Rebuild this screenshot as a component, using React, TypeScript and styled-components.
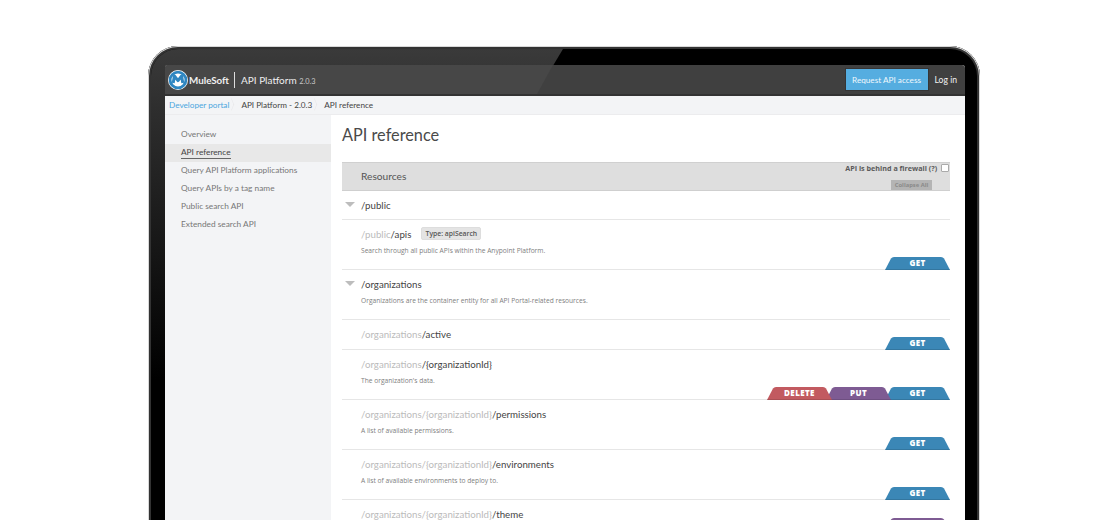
import React from "react";
import styled, { createGlobalStyle } from "styled-components";

type Method = "GET" | "PUT" | "DELETE";

interface Resource {
  dim?: string;
  name: string;
  desc?: string;
  badge?: string;
  top?: boolean;
  methods?: Method[];
  height: number;
}

const navItems = [
  "Overview",
  "API reference",
  "Query API Platform applications",
  "Query APIs by a tag name",
  "Public search API",
  "Extended search API",
];

const resources: Resource[] = [
  { name: "/public", top: true, height: 29 },
  {
    dim: "/public",
    name: "/apis",
    badge: "Type: apiSearch",
    desc: "Search through all public APIs within the Anypoint Platform.",
    methods: ["GET"],
    height: 50,
  },
  {
    name: "/organizations",
    top: true,
    desc: "Organizations are the container entity for all API Portal-related resources.",
    height: 50,
  },
  { dim: "/organizations", name: "/active", methods: ["GET"], height: 30 },
  {
    dim: "/organizations",
    name: "/{organizationId}",
    desc: "The organization's data.",
    methods: ["GET", "PUT", "DELETE"],
    height: 50,
  },
  {
    dim: "/organizations/{organizationId}",
    name: "/permissions",
    desc: "A list of available permissions.",
    methods: ["GET"],
    height: 50,
  },
  {
    dim: "/organizations/{organizationId}",
    name: "/environments",
    desc: "A list of available environments to deploy to.",
    methods: ["GET"],
    height: 50,
  },
  { dim: "/organizations/{organizationId}", name: "/theme", methods: ["PUT"], height: 30 },
];

const App: React.FC = () => {
  return (
    <Stage>
      <GlobalStyle />
      <Laptop>
        <Screen>
          <Header>
            <Brand>
              <svg width="20" height="20" viewBox="0 0 20 20">
                <circle cx="10" cy="10" r="10" fill="#fff" />
                <circle cx="10" cy="10" r="7.9" fill="none" stroke="#2f86c1" strokeWidth="2.8" />
                <path
                  d="M5.2 13 L6.4 6 L10 10.6 L13.6 6 L14.8 13"
                  fill="none"
                  stroke="#2f86c1"
                  strokeWidth="3"
                  strokeLinejoin="round"
                />
              </svg>
              <BrandName>MuleSoft</BrandName>
              <BrandDivider />
              <Product>
                API Platform <Version>2.0.3</Version>
              </Product>
            </Brand>
            <HeaderActions>
              <RequestButton>Request API access</RequestButton>
              <LogIn>Log in</LogIn>
            </HeaderActions>
          </Header>
          <Breadcrumbs>
            <Crumb link>Developer portal</Crumb>
            <Crumb>API Platform - 2.0.3</Crumb>
            <Crumb last>API reference</Crumb>
          </Breadcrumbs>
          <Body>
            <Sidebar>
              {navItems.map((item) => (
                <NavItem key={item} active={item === "API reference"}>
                  <span>{item}</span>
                </NavItem>
              ))}
            </Sidebar>
            <Main>
              <Title>API reference</Title>
              <ResourcesBar>
                <ResourcesLabel>Resources</ResourcesLabel>
                <BarControls>
                  <Firewall>
                    API is behind a firewall (?) <FakeCheckbox />
                  </Firewall>
                  <CollapseAll>Collapse All</CollapseAll>
                </BarControls>
              </ResourcesBar>
              {resources.map((res) => (
                <Row key={res.name} rowHeight={res.height}>
                  {res.top && <Caret />}
                  <RowText>
                    <PathLine>
                      {res.dim && <Dim>{res.dim}</Dim>}
                      {res.name}
                      {res.badge && <Badge>{res.badge}</Badge>}
                    </PathLine>
                    {res.desc && <Desc>{res.desc}</Desc>}
                  </RowText>
                  {res.methods && (
                    <Tabs>
                      {res.methods.map((m) => (
                        <Tab key={m} method={m}>
                          {m}
                        </Tab>
                      ))}
                    </Tabs>
                  )}
                </Row>
              ))}
            </Main>
          </Body>
        </Screen>
      </Laptop>
    </Stage>
  );
};

export default App;

const GlobalStyle = createGlobalStyle`
  html, body {
    margin: 0;
    padding: 0;
    background: #fff;
    overflow: hidden;
  }
`;

const din = `Lato, "Liberation Sans", sans-serif`;
const open = `"Open Sans", "Liberation Sans", sans-serif`;

const tabColors: { [key in Method]: string } = {
  GET: "#3b87b6",
  PUT: "#7e5b93",
  DELETE: "#c25a60",
};

const Stage = styled.div`
  width: 1120px;
  height: 520px;
  overflow: hidden;
  padding: 46px 0 0 148px;
  box-sizing: border-box;
`;

const Laptop = styled.div`
  position: relative;
  width: 832px;
  height: 520px;
  box-sizing: border-box;
  padding: 19px 15px 0 17px;
  background: #000;
  border-radius: 30px 30px 0 0;
  box-shadow: inset 0 0 0 1px #d8d8d8, inset 0 0 0 3px #333;

  &::before {
    content: "";
    position: absolute;
    inset: 3px 3px 0 3px;
    border-radius: 27px 27px 0 0;
    background: linear-gradient(#3a3a3a 0, #2e2e2e 60px, #000 330px);
    clip-path: polygon(0 0, 412px 0, 100px 520px, 0 520px);
  }
`;

const Screen = styled.div`
  position: relative;
  width: 800px;
  height: 470px;
  background: #fff;
  border-radius: 3px 3px 0 0;
  overflow: hidden;
`;

const Header = styled.div`
  position: relative;
  height: 29px;
  display: flex;
  align-items: center;
  justify-content: space-between;
  background: #404040;
  border-bottom: 2px solid #333;

  &::before {
    content: "";
    position: absolute;
    inset: 0;
    background: #474747;
    clip-path: polygon(0 0, 388px 0, 372px 100%, 0 100%);
  }
`;

const Brand = styled.div`
  position: relative;
  display: flex;
  align-items: center;
  padding-left: 3px;
  color: #fff;
`;

const BrandName = styled.span`
  font: 700 9.8px ${din};
  margin-left: 1px;
  width: 45px;
  color: #f0f0f0;
  white-space: nowrap;
`;

const BrandDivider = styled.span`
  width: 1px;
  height: 16px;
  background: #ddd;
  margin: 0 6px 0 0;
`;

const Product = styled.span`
  font: 400 10px ${din};
  color: #eee;
  white-space: nowrap;
`;

const Version = styled.span`
  font-size: 7.4px;
  color: #c8c8c8;
`;

const HeaderActions = styled.div`
  position: relative;
  display: flex;
  align-items: center;
  padding-right: 8px;
`;

const RequestButton = styled.div`
  width: 82px;
  height: 21px;
  display: flex;
  align-items: center;
  justify-content: center;
  background: #55ade0;
  box-shadow: 0 0 0 1px #353535;
  color: #f0f8fd;
  font: 400 8.2px ${din};
  white-space: nowrap;
`;

const LogIn = styled.div`
  margin-left: 7px;
  color: #f2f2f2;
  font: 400 8.6px ${din};
  white-space: nowrap;
`;

const Breadcrumbs = styled.div`
  height: 18px;
  display: flex;
  align-items: center;
  background: #f3f4f6;
  border-bottom: 1px solid #ececee;
  padding-left: 4px;
`;

const Crumb = styled.span<{ link?: boolean; last?: boolean }>`
  position: relative;
  font: 400 8.2px ${din};
  color: ${(props) => (props.link ? "#4aa6de" : "#444")};
  margin-right: ${(props) => (props.last ? "0" : "12px")};
  white-space: nowrap;

  &::after {
    content: "";
    display: ${(props) => (props.last ? "none" : "block")};
    position: absolute;
    right: -7px;
    top: 0;
    width: 8px;
    height: 8px;
    border-top: 1px solid #e6e6e8;
    border-right: 1px solid #e6e6e8;
    transform: scaleX(0.4) rotate(45deg);
  }
`;

const Body = styled.div`
  display: flex;
  height: 420px;
`;

const Sidebar = styled.div`
  width: 166px;
  flex: none;
  box-sizing: border-box;
  padding-top: 11px;
  background: #f3f4f6;
`;

const NavItem = styled.div<{ active?: boolean }>`
  height: 18px;
  box-sizing: border-box;
  display: flex;
  align-items: center;
  padding: 0 0 1px 16px;
  background: ${(props) => (props.active ? "#e8e8e8" : "transparent")};

  > span {
    font: 400 8.3px ${din};
    color: ${(props) => (props.active ? "#444" : "#777")};
    border-bottom: ${(props) => (props.active ? "1px solid #666" : "none")};
    line-height: 11px;
    white-space: nowrap;
  }
`;

const Main = styled.div`
  flex: 1;
  box-sizing: border-box;
  padding: 0 15px 0 11px;
`;

const Title = styled.h1`
  margin: 0;
  height: 38px;
  padding-bottom: 9px;
  display: flex;
  align-items: center;
  font: 400 16.3px ${din};
  color: #4a4a4a;
`;

const ResourcesBar = styled.div`
  height: 29px;
  box-sizing: border-box;
  display: flex;
  justify-content: space-between;
  background: #dedede;
  border-top: 1px solid #d0d0d0;
  border-bottom: 1px solid #cfcfcf;
`;

const ResourcesLabel = styled.div`
  font: 400 10.2px ${din};
  color: #555;
  padding-left: 19px;
  line-height: 26px;
`;

const BarControls = styled.div`
  display: flex;
  flex-direction: column;
  align-items: flex-end;
  padding-right: 1px;
`;

const Firewall = styled.div`
  display: flex;
  align-items: center;
  gap: 2px;
  height: 10px;
  font: 700 7.2px ${open};
  color: #5a5a5a;
  white-space: pre;
`;

const FakeCheckbox = styled.span`
  width: 6px;
  height: 6px;
  background: #fff;
  border: 1px solid #aaa;
  border-radius: 1px;
`;

const CollapseAll = styled.div`
  width: 41px;
  height: 10px;
  margin: 7px 17px 0 0;
  text-align: center;
  background: #b4b4b4;
  font: 700 5.8px/10px ${open};
  color: #8a8a8a;
  white-space: nowrap;
`;

const Row = styled.div<{ rowHeight: number }>`
  height: ${(props) => props.rowHeight}px;
  box-sizing: border-box;
  display: flex;
  border-bottom: 1px solid #e6e6e6;
  padding-left: 19px;
  position: relative;

  &:last-child {
    border-bottom: none;
  }
`;

const Caret = styled.span`
  position: absolute;
  left: 3px;
  top: 11px;
  width: 0;
  height: 0;
  border-left: 5px solid transparent;
  border-right: 5px solid transparent;
  border-top: 5px solid #bdbdbd;
`;

const RowText = styled.div`
  flex: 1;
  padding-top: 7px;
`;

const PathLine = styled.div`
  display: flex;
  align-items: center;
  height: 13px;
  font: 400 9.7px ${din};
  color: #444;
  white-space: nowrap;
`;

const Dim = styled.span`
  color: #bbb;
`;

const Badge = styled.span`
  margin-left: 10px;
  height: 13px;
  width: 60px;
  display: inline-flex;
  align-items: center;
  justify-content: center;
  background: #e4e4e4;
  border: 1px solid #ddd;
  box-sizing: border-box;
  border-radius: 2px;
  font: 600 6.8px ${open};
  color: #555;
`;

const Desc = styled.div`
  margin-top: 6px;
  font: 400 6.65px/9px ${open};
  color: #808080;
  white-space: nowrap;
`;

const Tabs = styled.div`
  display: flex;
  flex-direction: row-reverse;
  align-self: flex-end;
  margin-bottom: -1px;
`;

const Tab = styled.div<{ method: Method }>`
  width: 65px;
  height: 13px;
  margin-left: -6px;
  padding-bottom: 1px;
  display: flex;
  align-items: center;
  justify-content: center;
  background: ${(props) => tabColors[props.method]};
  border-bottom: 1px solid rgba(0, 0, 0, 0.12);
  box-sizing: border-box;
  clip-path: path("M0 13 L6 1.5 Q7 0 9 0 L56 0 Q58 0 59 1.5 L65 13 Z");
  color: #fff;
  font: 800 8px ${open};
  letter-spacing: 0.4px;
`;
